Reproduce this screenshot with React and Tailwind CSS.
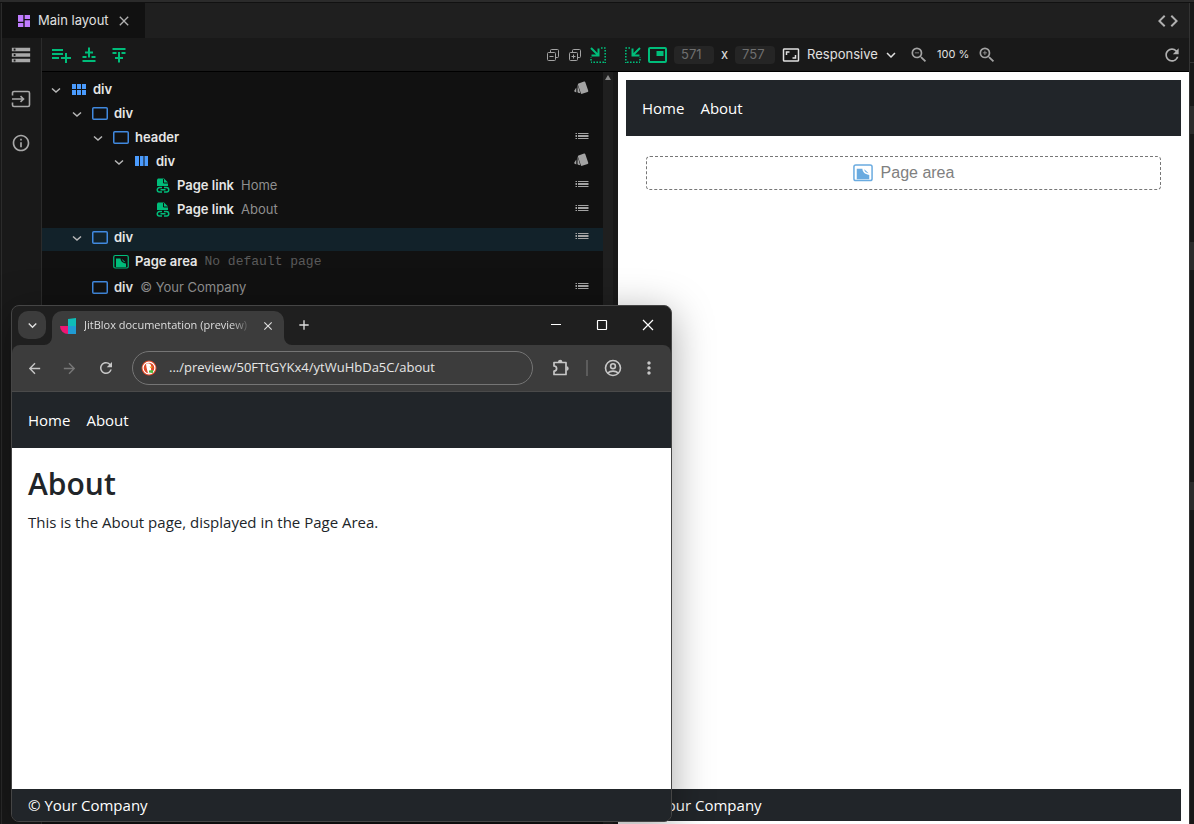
import React from "react";
import {
  MdDashboard, MdClose, MdCode, MdStorage, MdInfoOutline, MdPlaylistAdd,
  MdAspectRatio, MdZoomOut, MdZoomIn, MdRefresh, MdArrowBack,
  MdArrowForward, MdMoreVert, MdAdd, MdKeyboardArrowDown,
} from "react-icons/md";

const UI_FONT = "font-['Inter',sans-serif]";
const WEB_FONT = "font-['Open_Sans',sans-serif]";

function InputIcon() {
  return (
    <svg width="20" height="18" viewBox="0 0 20 18" fill="none" stroke="currentColor" strokeWidth="1.6">
      <path d="M1.5 5.5V3A1.5 1.5 0 0 1 3 1.5h14A1.5 1.5 0 0 1 18.5 3v12a1.5 1.5 0 0 1-1.5 1.5H3A1.5 1.5 0 0 1 1.5 15v-2.500" />
      <path d="M1 9h11M9.5 6.200l3 2.800-3 2.800" />
    </svg>
  );
}

function InsertIcon({ below }) {
  return (
    <svg width="14" height="16" viewBox="0 0 14 16" stroke="currentColor" strokeWidth="2" fill="none">
      {below ? (
        <path d="M0.5 2h13M0.5 6h4M9.500 6h4M7 5v10.500M3 11h8" />
      ) : (
        <path d="M0.5 14h13M0.5 10h4M9.500 10h4M7 0.500v10M3 5.500h8" />
      )}
    </svg>
  );
}

function CopiesIcon({ plus }) {
  return (
    <svg width="12" height="12" viewBox="0 0 12 12" stroke="currentColor" fill="none">
      <path d="M3.5 3.5v-2a1 1 0 0 1 1-1h6a1 1 0 0 1 1 1v6a1 1 0 0 1-1 1h-2" />
      <rect x="0.5" y="3.5" width="8" height="8" rx="1" />
      <path d="M2.5 7.5h4" />
      {plus && <path d="M4.5 5.5v4" />}
    </svg>
  );
}

function DockIcon({ mirrored }) {
  return (
    <svg width="16" height="16" viewBox="0 0 16 16" fill="none" stroke="currentColor">
      <g transform={mirrored ? "translate(16 0) scale(-1 1)" : undefined}>
        <path d="M1 1l7 7M8.500 1.500v7H1.500" strokeWidth="2" />
        <path d="M11 1h5M15.200 3v13M14 15.200H1M1 13.500V10" strokeWidth="1.600" strokeDasharray="1.600 1.400" />
      </g>
    </svg>
  );
}

function PipIcon() {
  return (
    <svg width="19" height="16" viewBox="0 0 19 16">
      <rect x="1" y="1" width="17" height="14" rx="1" fill="none" stroke="currentColor" strokeWidth="2" />
      <path d="M8.500 4h7v5h-7z" fill="currentColor" />
    </svg>
  );
}

function SwatchIcon() {
  return (
    <svg width="15" height="14" viewBox="0 0 15 14" fill="currentColor">
      <rect x="5.200" y="1.200" width="7.800" height="11" rx="1" transform="rotate(-19 9 6.700)" />
      <path d="M3.600 3.500l2.600 8.700-2-.5a1 1 0 0 1-.7-1.200z" />
      <path d="M2.300 6.500v5L.8 10.700a1 1 0 0 1-.4-1.300z" />
    </svg>
  );
}

function PuzzleIcon() {
  return (
    <svg width="18" height="18" viewBox="0 0 18 18" fill="currentColor">
      <path d="M2 3.500h12V15.500H2v-3.300a2.600 2.600 0 0 0 0-5.200z" fill="none" stroke="currentColor" strokeWidth="1.700" strokeLinejoin="round" />
      <path d="M6 3a2.200 2.200 0 0 1 4.400 0zM14.500 7.300a2.200 2.200 0 0 1 0 4.400z" />
    </svg>
  );
}

function Chevron() {
  return (
    <svg width="12" height="12" viewBox="0 0 12 12" fill="none" stroke="#b8b8b8" strokeWidth="1.500">
      <path d="M2 4.500L6 8l4-3.500" />
    </svg>
  );
}

function AreaIcon({ className }) {
  return (
    <svg className={className} viewBox="0 0 16 16">
      <rect x="0.750" y="1.500" width="14.500" height="12.500" rx="1.500" fill="none" stroke="currentColor" strokeWidth="1.200" />
      <path d="M3 4.500h4.500c.3 2.500 1.500 4.300 5.500 5V13H3z" fill="currentColor" />
      <path d="M9 5l3.500 3.200C10.500 8 9.300 7 9 5z" fill="currentColor" />
    </svg>
  );
}

function NodeIcon({ kind }) {
  if (kind === "grid")
    return (
      <svg width="16" height="16" viewBox="0 0 16 16" fill="#4a9bfd">
        <path d="M1 2h4v5H1zM6 2h4v5H6zM11 2h4v5h-4zM1 8h4v5H1zM6 8h4v5H6zM11 8h4v5h-4z" />
      </svg>
    );
  if (kind === "columns")
    return (
      <svg width="16" height="16" viewBox="0 0 16 16" fill="#4a9bfd">
        <path d="M1 2h4v10H1zM6 2h3.500v10H6zM10.500 2h3.500v10h-3.500z" />
      </svg>
    );
  if (kind === "box")
    return (
      <svg width="16" height="16" viewBox="0 0 16 16" fill="none" stroke="#4189df" strokeWidth="1.500">
        <rect x="0.750" y="1.750" width="14.500" height="11.500" rx="1" />
      </svg>
    );
  if (kind === "link")
    return (
      <svg width="16" height="16" viewBox="0 0 16 16">
        <path d="M3 0.500h6l4 4V8H2V1.500z" fill="#00bd7a" />
        <path d="M8.500 1v4H13" stroke="#111" fill="none" />
        <path d="M7 9.500H4.500a2.200 2.200 0 0 0 0 4.500H7M9 9.500h2.500a2.200 2.200 0 0 1 0 4.500H9M5.500 11.750h5" stroke="#00bd7a" strokeWidth="1.500" fill="none" />
      </svg>
    );
  return <AreaIcon className="size-4 text-[#00bd7a]" />;
}

function ListIcon() {
  return (
    <svg width="14" height="8" viewBox="0 0 14 8" stroke="#a3a3a3">
      <path d="M0.500 1.500h1.500M3 1.500h10.500M0.500 6.500h1.500M3 6.500h10.500" />
      <path d="M0.500 4h1.500M3 4h10.500" strokeWidth="2" />
    </svg>
  );
}

const INDENT = ["pl-2", "pl-[29px]", "pl-[50px]", "pl-[71px]", "pl-[92px]"];

const NODES = [
  { depth: 0, kind: "grid", name: "div", open: true, action: "style" },
  { depth: 1, kind: "box", name: "div", open: true },
  { depth: 2, kind: "box", name: "header", open: true, action: "list" },
  { depth: 3, kind: "columns", name: "div", open: true, action: "style" },
  { depth: 4, kind: "link", name: "Page link", note: "Home", action: "list" },
  { depth: 4, kind: "link", name: "Page link", note: "About", action: "list" },
  { depth: 1, kind: "box", name: "div", open: true, action: "list", selected: true },
  { depth: 2, kind: "area", name: "Page area", note: "No default page", mono: true },
  { depth: 1, kind: "box", name: "div", note: "© Your Company", action: "list", last: true },
];

function TreeRow({ node }) {
  const spacing = node.selected ? "mt-[6px] h-[23px] bg-[#12222a] pb-[3px]" : node.mono ? "h-[22px]" : node.last ? "mt-[3px] h-6" : "h-6";
  return (
    <li className={`flex items-center pr-[14px] ${INDENT[node.depth]} ${spacing}`}>
      {node.open ? (
        <button type="button" aria-label="Collapse" className="mr-[9px]"><Chevron /></button>
      ) : (
        <span className="w-[21px]" />
      )}
      <NodeIcon kind={node.kind} />
      <span className="ml-[6px] font-semibold text-[#e6e6e6]">{node.name}</span>
      {node.note && (
        <span className={node.mono ? "ml-[7px] font-['Liberation_Mono',monospace] text-[#5a5a5a]" : "ml-[7px] text-[#8f8f8f]"}>{node.note}</span>
      )}
      {node.action && (
        <button type="button" aria-label="Layout options" className="ml-auto pb-1 text-[#a3a3a3]">
          {node.action === "style" ? <SwatchIcon /> : <ListIcon />}
        </button>
      )}
    </li>
  );
}

function NavLinks() {
  return (
    <nav className="flex h-14 shrink-0 items-center gap-4 bg-[#212529] px-4 text-[15px] text-white">
      <a href="#home">Home</a>
      <a href="#about">About</a>
    </nav>
  );
}

function Footer() {
  return <footer className="flex h-8 shrink-0 items-center bg-[#212529] px-4 text-[15px] text-white">© Your Company</footer>;
}

function TreePanel() {
  return (
    <section className="flex w-[571px] shrink-0 flex-col">
      <div className="flex h-[34px] shrink-0 items-center border-b border-black pl-[7px] text-[#00bd7a]">
        <button type="button" aria-label="Add inside"><MdPlaylistAdd size={24} /></button>
        <button type="button" aria-label="Insert above" className="ml-[9px]"><InsertIcon /></button>
        <button type="button" aria-label="Insert below" className="ml-[16px]"><InsertIcon below /></button>
        <div className="ml-auto flex items-center gap-[10px] text-[#a3a3a3]">
          <button type="button" aria-label="Collapse all"><CopiesIcon /></button>
          <button type="button" aria-label="Expand all"><CopiesIcon plus /></button>
          <button type="button" aria-label="Dock left" className="mr-[7px] -ml-[1px] text-[#00bd7a]"><DockIcon /></button>
        </div>
      </div>
      <div className="flex min-h-0 flex-1 bg-[#111]">
        <ul className="min-w-0 flex-1 overflow-hidden pt-[6px] text-[13px]">
          {NODES.map((n, i) => <TreeRow key={i} node={n} />)}
        </ul>
        <div className="w-[10px] bg-[#1f1f1f] pt-[3px]">
          <svg width="10" height="5" viewBox="0 0 10 5" className="mx-auto"><path d="M2 5l3-5 3 5z" fill="#8a8a8a" /></svg>
        </div>
      </div>
    </section>
  );
}

function PreviewPanel() {
  const field = "h-[18px] w-10 rounded bg-[#252525] px-[7px] text-[13px] text-[#6f6f6f]";
  return (
    <section className="flex min-w-0 flex-1 flex-col">
      <div className="flex h-[34px] shrink-0 items-center border-b border-black pr-[7px] pl-[12px] text-[13px] text-[#e0e0e0]">
        <button type="button" aria-label="Dock right" className="text-[#00bd7a]"><DockIcon mirrored /></button>
        <button type="button" aria-label="Picture in picture" className="ml-[7px] text-[#00bd7a]"><PipIcon /></button>
        <input aria-label="Width" defaultValue="571" className={`ml-[7px] ${field}`} />
        <span className="mx-[7px]">x</span>
        <input aria-label="Height" defaultValue="757" className={field} />
        <button type="button" aria-label="Fit" className="ml-[7px]"><MdAspectRatio size={18} /></button>
        <div className="relative ml-[7px] flex items-center">
          <select aria-label="Device" className="w-[93px] appearance-none bg-transparent text-[13px]">
            <option>Responsive</option>
          </select>
          <MdKeyboardArrowDown size={18} className="pointer-events-none absolute right-0" />
        </div>
        <button type="button" aria-label="Zoom out" className="ml-[9px] text-[#a3a3a3]"><MdZoomOut size={20} /></button>
        <span className="mx-[8px] text-[11px] whitespace-nowrap">100 %</span>
        <button type="button" aria-label="Zoom in" className="text-[#a3a3a3]"><MdZoomIn size={20} /></button>
        <button type="button" aria-label="Refresh" className="ml-auto text-[#b0b0b0]"><MdRefresh size={20} /></button>
      </div>
      <div className={`ml-[5px] flex min-h-0 flex-1 flex-col bg-white px-2 pt-2 pb-[3px] ${WEB_FONT}`}>
        <NavLinks />
        <main className="flex-1 p-5">
          <div className="flex h-[34px] items-center justify-center gap-2 rounded border border-dashed border-[#777] font-['Liberation_Sans',sans-serif] text-base text-[#808080]">
            <AreaIcon className="size-5 text-[#6aabe0]" />
            Page area
          </div>
        </main>
        <Footer />
      </div>
    </section>
  );
}

function BrandIcon() {
  return (
    <svg width="16" height="16" viewBox="0 0 16 16">
      <path d="M0 8h8v8A8 8 0 0 1 0 8z" fill="#ee1673" />
      <path d="M8 1l8-1v8H8z" fill="#0fbdb8" />
      <path d="M8 8h8v8H8z" fill="#209bd4" />
    </svg>
  );
}

function DuckIcon() {
  return (
    <svg width="16" height="16" viewBox="0 0 16 16">
      <circle cx="8" cy="8" r="7.500" fill="#de4a2a" />
      <circle cx="8" cy="8" r="5.900" fill="none" stroke="#fff" strokeWidth="1.200" />
      <path d="M5 4c2-1.500 5-.5 5.200 2.500L10 9l.5 4-3.500.5L5.500 7.500z" fill="#fff" />
      <path d="M8.500 6.500l3.500.3-2.500 1.400z" fill="#f7b51c" />
      <path d="M8 10.500l4-.5v3l-4-.5z" fill="#4cba3c" />
    </svg>
  );
}

function AccountIcon() {
  return (
    <svg width="18" height="18" viewBox="0 0 18 18" fill="none" stroke="currentColor" strokeWidth="1.600">
      <circle cx="9" cy="9" r="7.500" />
      <circle cx="9" cy="7.200" r="2.400" />
      <path d="M3.800 14c2.500-2.500 8-2.500 10.400 0" />
    </svg>
  );
}

function BrowserWindow() {
  return (
    <div className={`absolute top-[305px] bottom-[2px] left-[11px] flex w-[661px] flex-col overflow-hidden rounded-lg border border-[#454545] bg-[#1f1f1f] text-[#dedede] shadow-[0_8px_40px_rgba(0,0,0,0.35)] ${WEB_FONT}`}>
      <div className="flex h-[39px] shrink-0 items-end pl-[6px]">
        <button type="button" aria-label="Search tabs" className="mb-[6px] flex size-7 items-center justify-center rounded-[10px] bg-[#3c3c3c]">
          <MdKeyboardArrowDown size={17} />
        </button>
        <div className="relative ml-[6px] flex h-[34px] w-[232px] items-center rounded-t-[10px] bg-[#3c3c3c] pb-[5px] pl-2">
          <svg width="8" height="8" className="absolute bottom-0 -left-2" viewBox="0 0 8 8"><path d="M8 0v8H0a8 8 0 0 0 8-8z" fill="#3c3c3c" /></svg>
          <svg width="8" height="8" className="absolute -right-2 bottom-0" viewBox="0 0 8 8"><path d="M0 0v8h8a8 8 0 0 1-8-8z" fill="#3c3c3c" /></svg>
          <BrandIcon />
          <span className="ml-2 w-[167px] text-[11px] whitespace-nowrap [mask-image:linear-gradient(to_right,black_88%,transparent)]">
            JitBlox documentation (preview)
          </span>
          <button type="button" aria-label="Close tab" className="ml-[10px]"><MdClose size={14} /></button>
        </div>
        <button type="button" aria-label="New tab" className="mb-[12px] ml-[12px]"><MdAdd size={16} /></button>
        <div className="mb-[14px] ml-auto flex items-center gap-[34px] pr-[17px] text-white">
          <button type="button" aria-label="Minimize"><svg width="12" height="12" viewBox="0 0 12 12" stroke="currentColor"><path d="M1 5.5h10" /></svg></button>
          <button type="button" aria-label="Maximize"><svg width="12" height="12" viewBox="0 0 12 12" stroke="currentColor" fill="none"><rect x="1.5" y="1.5" width="9" height="9" rx="0.5" strokeWidth="1.200" /></svg></button>
          <button type="button" aria-label="Close"><svg width="12" height="12" viewBox="0 0 12 12" stroke="currentColor" strokeWidth="1.200"><path d="M1 1l10 10M11 1L1 11" /></svg></button>
        </div>
      </div>
      <div className="flex h-[47px] shrink-0 items-center rounded-t-lg border-b border-[#4a4a4a] bg-[#3c3c3c] pr-[12px] pl-[14px] text-[#c7c7c7]">
        <button type="button" aria-label="Back"><MdArrowBack size={17} /></button>
        <button type="button" aria-label="Forward" className="ml-[18px] text-[#777]"><MdArrowForward size={17} /></button>
        <button type="button" aria-label="Reload" className="ml-[19px]"><MdRefresh size={18} /></button>
        <div className="ml-[17px] flex h-[34px] flex-1 items-center gap-[12px] rounded-full border border-[#757575] px-2">
          <DuckIcon />
          <input aria-label="Address" defaultValue=".../preview/50FTtGYKx4/ytWuHbDa5C/about" className="min-w-0 flex-1 bg-transparent text-[13px] text-[#e6e6e6]" />
        </div>
        <button type="button" aria-label="Extensions" className="ml-[19px]"><PuzzleIcon /></button>
        <span className="mx-[16px] h-4 w-[2px] bg-[#5c5c5c]" />
        <button type="button" aria-label="Profile"><AccountIcon /></button>
        <button type="button" aria-label="Menu" className="ml-[17px]"><MdMoreVert size={20} /></button>
      </div>
      <NavLinks />
      <main className="flex-1 bg-white px-4 pt-[17px] text-[#212529]">
        <h1 className="text-[30px] leading-[38px] font-semibold">About</h1>
        <p className="mt-[7px] text-[15px] leading-6">This is the About page, displayed in the Page Area.</p>
      </main>
      <Footer />
    </div>
  );
}

export default function App() {
  return (
    <div className={`relative flex h-screen flex-col overflow-hidden bg-[#191919] text-[13px] text-[#e0e0e0] ${UI_FONT}`}>
      <div className="h-[3px] shrink-0 border-b border-[#111] bg-[#2b2b2b]" />
      <div className="flex min-h-0 flex-1">
        <div className="w-[2px] border-r border-[#2b2b2b] bg-[#181818]" />
        <div className="flex min-w-0 flex-1 flex-col">
          <div className="flex h-[35px] shrink-0 items-stretch justify-between bg-[#1f1f1f]">
            <div className="flex w-[143px] items-center bg-[#111] pl-[14px]">
              <MdDashboard size={16} className="text-[#c07cff]" />
              <span className="ml-[6px] whitespace-nowrap">Main layout</span>
              <button type="button" aria-label="Close" className="ml-[7px] text-[#b0b0b0]"><MdClose size={16} /></button>
            </div>
            <button type="button" aria-label="View code" className="pr-[9px] text-[#b0b0b0]"><MdCode size={24} /></button>
          </div>
          <div className="flex min-h-0 flex-1">
            <aside className="flex w-10 shrink-0 flex-col items-center border-r border-[#2b2b2b] pt-[6px] pr-[2px] text-[#a8a8a8]">
              <button type="button" aria-label="Structure" className="flex h-[22px] items-center"><MdStorage size={22} /></button>
              <button type="button" aria-label="Inputs" className="mt-[22px] flex h-[22px] items-center"><InputIcon /></button>
              <button type="button" aria-label="Information" className="mt-[22px] flex h-[22px] items-center"><MdInfoOutline size={20} /></button>
            </aside>
            <TreePanel />
            <PreviewPanel />
          </div>
        </div>
        <div className="w-[5px] border-l border-[#333] bg-[#181818]">
          <div className="h-[60px] border-b border-[#333]" />
          <div className="mt-[43px] h-7 bg-[#2b2b2b]" />
          <div className="mt-[108px] h-7 bg-[#2b2b2b]" />
          <div className="mt-[212px] h-7 bg-[#2b2b2b]" />
        </div>
      </div>
      <BrowserWindow />
    </div>
  );
}
